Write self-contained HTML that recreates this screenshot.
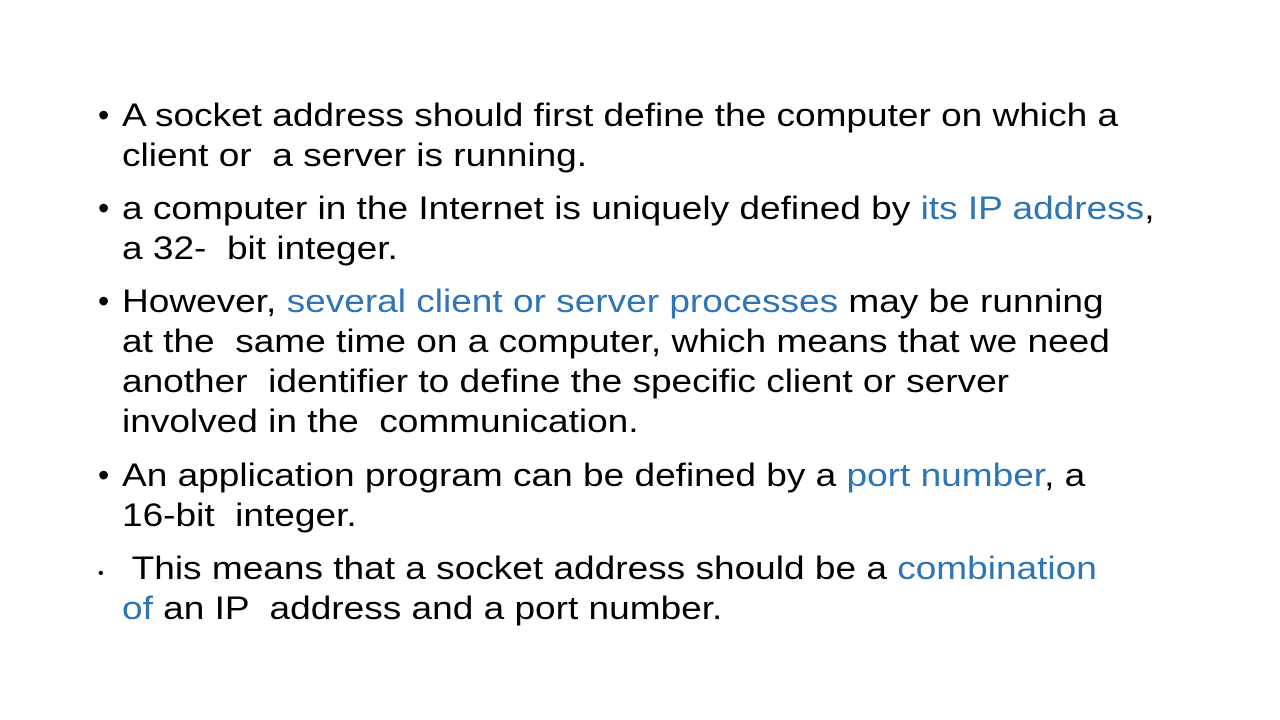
<!DOCTYPE html>
<html><head><meta charset="utf-8"><style>
body{margin:0;width:1280px;height:720px;background:#fff;position:relative;overflow:hidden;font-family:"Liberation Sans",Arial,sans-serif;color:#000}
.l{position:absolute;left:122px;font-size:32px;line-height:40px;white-space:pre;transform:scaleX(1.157);transform-origin:0 0}
.b{position:absolute;left:98px;font-size:32px;line-height:40px}
.s{position:absolute;left:98px;font-size:16px;line-height:20px}
.c{color:#2e75b6}
</style></head><body>
<div class="b" style="top:95px">•</div>
<div class="l" style="top:95px">A socket address should first define the computer on which a</div>
<div class="l" style="top:135px">client or  a server is running.</div>
<div class="b" style="top:188px">•</div>
<div class="l" style="top:188px">a computer in the Internet is uniquely defined by <span class="c">its IP address</span>,</div>
<div class="l" style="top:228px">a 32-  bit integer.</div>
<div class="b" style="top:281px">•</div>
<div class="l" style="top:281px">However, <span class="c">several client or server processes</span> may be running</div>
<div class="l" style="top:321px">at the  same time on a computer, which means that we need</div>
<div class="l" style="top:361px">another  identifier to define the specific client or server</div>
<div class="l" style="top:401px">involved in the  communication.</div>
<div class="b" style="top:455px">•</div>
<div class="l" style="top:455px">An application program can be defined by a <span class="c">port number</span>, a</div>
<div class="l" style="top:495px">16-bit  integer.</div>
<div class="s" style="top:564px">•</div>
<div class="l" style="top:548px"> This means that a socket address should be a <span class="c">combination</span></div>
<div class="l" style="top:588px"><span class="c">of</span> an IP  address and a port number.</div>
</body></html>
